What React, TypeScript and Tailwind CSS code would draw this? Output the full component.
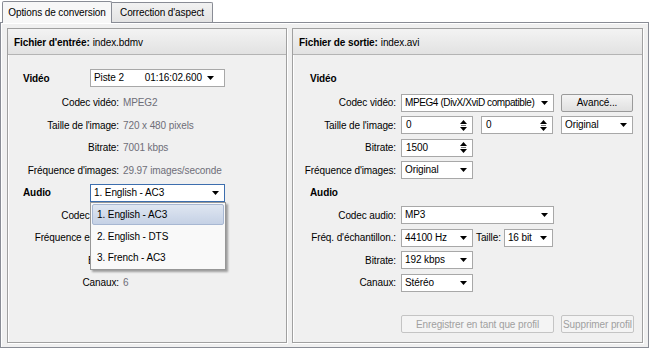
import React from "react";

function Arrow() {
  return (
    <svg width="7" height="4" viewBox="0 0 7 4" className="shrink-0">
      <path d="M0 0H7L3.5 4Z" fill="#000" />
    </svg>
  );
}

function SpinArrows() {
  return (
    <svg width="7" height="11" viewBox="0 0 7 11" className="shrink-0">
      <path d="M3.5 0L7 4H0Z" fill="#000" />
      <rect x="1" y="5" width="5" height="1" fill="#7a7a7a" />
      <path d="M0 7H7L3.5 11Z" fill="#000" />
    </svg>
  );
}

function Select({
  cls,
  text,
  focused,
  textCls,
  children,
}: {
  cls: string;
  text: string;
  focused?: boolean;
  textCls?: string;
  children?: React.ReactNode;
}) {
  return (
    <div
      className={
        "relative h-[18px] bg-white border flex items-center pl-[3px] pr-[5px] shrink-0 " +
        (focused ? "border-[#3d6eae] " : "border-[#a8a8a8] ") +
        cls
      }
    >
      <span className={"flex-1 whitespace-nowrap overflow-hidden leading-none " + (textCls ?? "")}>
        {text}
      </span>
      <Arrow />
      {children}
    </div>
  );
}

function Spin({ cls, text }: { cls: string; text: string }) {
  return (
    <div
      className={
        "h-[18px] bg-white border border-[#a8a8a8] flex items-center pl-[4px] pr-[5px] shrink-0 " +
        cls
      }
    >
      <span className="flex-1 leading-none">{text}</span>
      <SpinArrows />
    </div>
  );
}

function Panel({
  title,
  file,
  children,
  cls,
}: {
  title: string;
  file: string;
  children: React.ReactNode;
  cls: string;
}) {
  return (
    <div
      className={
        "relative flex flex-col border border-[#a0a0a0] shadow-[1px_1px_0_#ffffff,inset_1px_1px_0_#ffffff] bg-[#f0f0f0] " +
        cls
      }
    >
      <div className="h-[26px] shrink-0 flex items-center pl-[6px] pt-[1px] bg-gradient-to-b from-[#f3f3f3] to-[#e2e2e2] border-b border-[#b4b4b4]">
        <span className="font-bold">{title}</span>
        <span className="ml-[3px]">{file}</span>
      </div>
      {children}
    </div>
  );
}

function LRow({ label, value }: { label: string; value?: string }) {
  return (
    <div className="h-[22.5px] flex items-center">
      <div className="w-[111px] text-right whitespace-nowrap shrink-0">{label}</div>
      {value ? <div className="ml-[4px] text-[#6e6e78] whitespace-nowrap">{value}</div> : null}
    </div>
  );
}

function RRow({ label, children }: { label: string; children?: React.ReactNode }) {
  return (
    <div className="h-[22.5px] flex items-center">
      <div className="w-[103px] text-right whitespace-nowrap shrink-0">{label}</div>
      <div className="ml-[5px] flex items-center">{children}</div>
    </div>
  );
}

export default function App() {
  return (
    <div
      className="w-[650px] h-[350px] bg-white overflow-hidden text-[10px] tracking-[-0.1px] text-black relative"
      style={{ fontFamily: '"Liberation Sans", Arial, sans-serif' }}
    >
      {/* Tabs */}
      <div className="h-[22px] flex items-end pl-[2px]">
        <div className="relative z-10 h-[22px] mb-[-1px] w-[110px] flex items-center justify-center border border-b-0 border-[#898c95] bg-[#f7f7f7] rounded-t-[2px] whitespace-nowrap">
          Options de conversion
        </div>
        <div className="h-[20px] w-[101px] flex items-center justify-center border border-l-0 border-b-0 border-[#898c95] bg-gradient-to-b from-[#f2f2f2] to-[#e3e3e3] rounded-tr-[2px] whitespace-nowrap">
          Correction d'aspect
        </div>
      </div>

      {/* Pane */}
      <div className="w-[649px] h-[326px] border border-[#898c95] bg-[#f0f0f0] shadow-[inset_1px_1px_0_#ffffff] flex gap-[5px] pl-[6px] pt-[5px]">
        {/* Left panel */}
        <Panel title="Fichier d'entrée:" file="index.bdmv" cls="w-[280px] h-[315px]">
          <div className="pt-[12px] flex flex-col">
            <div className="h-[22.5px] mb-[2px] flex items-center">
              <div className="w-[82px] pl-[15px] font-bold shrink-0">Vidéo</div>
              <div className="h-[18px] w-[135px] bg-white border border-[#a8a8a8] flex items-center pl-[3px] pr-[10px]">
                <span className="leading-none">Piste 2</span>
                <span className="ml-auto leading-none">01:16:02.600</span>
                <span className="ml-[5px]">
                  <Arrow />
                </span>
              </div>
            </div>
            <LRow label="Codec vidéo:" value="MPEG2" />
            <LRow label="Taille de l'image:" value="720 x 480 pixels" />
            <LRow label="Bitrate:" value="7001 kbps" />
            <LRow label="Fréquence d'images:" value="29.97 images/seconde" />
            <div className="h-[22.5px] flex items-center">
              <div className="w-[82px] pl-[15px] font-bold shrink-0">Audio</div>
              <Select cls="w-[135px]" text="1. English - AC3" focused>
                <div className="absolute left-[-1px] top-[17px] w-[136px] z-20 bg-[#f9f9f9] border border-[#979797] shadow-[2px_2px_2px_rgba(0,0,0,0.35)] p-[1px]">
                  <div className="h-[21.5px] flex items-center pl-[4px] rounded-[2px] border border-[#a7b7d2] bg-gradient-to-b from-[#dfe6f1] to-[#c5d1e5]">
                    1. English - AC3
                  </div>
                  <div className="h-[21.5px] flex items-center pl-[5px]">2. English - DTS</div>
                  <div className="h-[21.5px] flex items-center pl-[5px]">3. French - AC3</div>
                </div>
              </Select>
            </div>
            <LRow label="Codec audio:" />
            <LRow label="Fréquence echant.:" />
            <LRow label="Bitrate:" />
            <LRow label="Canaux:" value="6" />
          </div>
        </Panel>

        {/* Right panel */}
        <Panel title="Fichier de sortie:" file="index.avi" cls="w-[351px] h-[315px]">
          <div className="pt-[12px] flex flex-col">
            <div className="h-[22.5px] mb-[2px] flex items-center pl-[17px] font-bold">Vidéo</div>
            <RRow label="Codec vidéo:">
              <Select
                cls="w-[153px]"
                text="MPEG4 (DivX/XviD compatible)"
                textCls="tracking-[-0.4px]"
              />
              <div className="ml-[7px] h-[18px] w-[72px] flex items-center justify-center border border-[#9a9a9a] rounded-[2px] bg-gradient-to-b from-[#f4f4f4] to-[#e0e0e0]">
                Avancé...
              </div>
            </RRow>
            <RRow label="Taille de l'image:">
              <Spin cls="w-[72px]" text="0" />
              <Spin cls="w-[72px] ml-[8px]" text="0" />
              <Select cls="w-[72px] ml-[8px]" text="Original" />
            </RRow>
            <RRow label="Bitrate:">
              <Spin cls="w-[72px]" text="1500" />
            </RRow>
            <RRow label="Fréquence d'images:">
              <Select cls="w-[72px]" text="Original" />
            </RRow>
            <div className="h-[22.5px] flex items-center pl-[17px] font-bold">Audio</div>
            <RRow label="Codec audio:">
              <Select cls="w-[153px]" text="MP3" />
            </RRow>
            <RRow label="Fréq. d'échantillon.:">
              <Select cls="w-[72px]" text="44100 Hz" />
              <span className="ml-[3px] mr-[3px] whitespace-nowrap">Taille:</span>
              <Select cls="w-[49px]" text="16 bit" />
            </RRow>
            <RRow label="Bitrate:">
              <Select cls="w-[72px]" text="192 kbps" />
            </RRow>
            <RRow label="Canaux:">
              <Select cls="w-[72px]" text="Stéréo" />
            </RRow>
            <div className="mt-[21px] flex items-center pl-[108px]">
              <div className="h-[18px] w-[153px] flex items-center justify-center border border-[#c4c4c4] rounded-[2px] bg-[#f4f4f4] text-[#a0a0a0]">
                Enregistrer en tant que profil
              </div>
              <div className="ml-[7px] h-[18px] w-[73px] flex items-center justify-center border border-[#c4c4c4] rounded-[2px] bg-[#f4f4f4] text-[#a0a0a0] whitespace-nowrap">
                Supprimer profil
              </div>
            </div>
          </div>
        </Panel>
      </div>
    </div>
  );
}
